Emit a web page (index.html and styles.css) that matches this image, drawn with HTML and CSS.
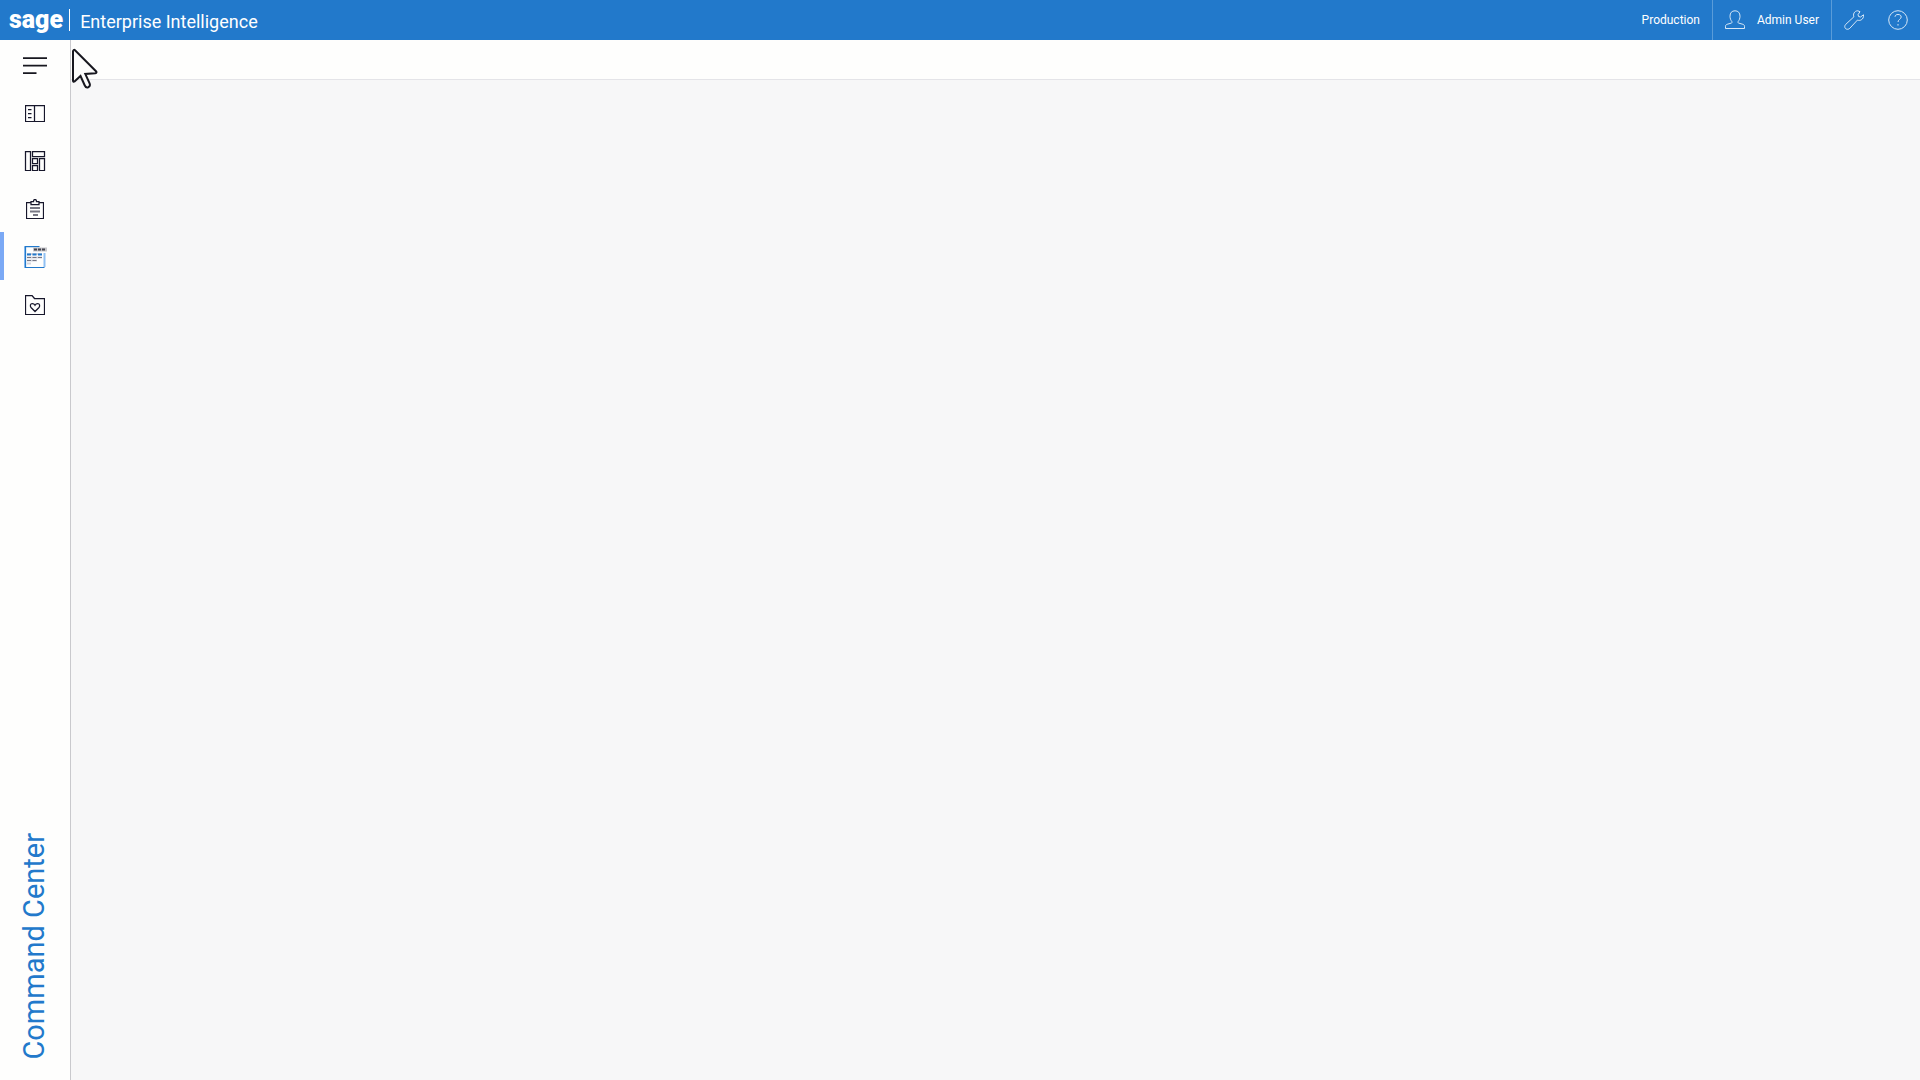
FILE: index.html
```html
<!DOCTYPE html>
<html lang="en">
<head>
    <meta charset="UTF-8">
    <title>Enterprise Intelligence</title>
    <link rel="stylesheet" href="styles.css">
</head>
<body>
<div class="app">
    <header class="header">
        <span class="logo">sage</span>
        <span class="product">Enterprise Intelligence</span>
        <div class="header-right">
            <span class="env">Production</span>
            <button class="user" type="button">
                <svg width="20" height="20" viewBox="0 0 20 20">
                    <path d="M.5 18.500v-2.200c0-1 .6-1.700 1.600-2l4.200-1.200c.8-.3 1-.9.6-1.500C5.800 10.200 5 8.500 5 6.200 5 2.800 6.800.8 10 .8s5 2 5 5.400c0 2.300-.8 4-1.900 5.400-.4.6-.2 1.200.6 1.500l4.200 1.200c1 .3 1.600 1 1.600 2v2.200z"/>
                </svg>
                <span>Admin User</span>
            </button>
            <button class="tool" type="button" aria-label="Settings">
                <svg width="20" height="20" viewBox="0 0 20 20">
                    <path d="M13.800.8 16 1.700l-2 3 .6 1.800 1.900.5 3-2.200c.3 2.300-.6 4.200-2.300 5.100-1.300.7-2.600.6-3.800.2l-7.600 8.200c-1.200 1.200-3 1.300-4.200.3-1.200-1.200-1.100-3 .1-4.200l8.200-7.600c-.5-1.200-.5-2.500.1-3.700.7-1.400 2-2.300 3.800-2.300z"/>
                </svg>
            </button>
            <button class="tool" type="button" aria-label="Help">
                <svg width="20" height="20" viewBox="0 0 20 20">
                    <circle cx="10" cy="10" r="9.300"/>
                    <path d="M7 6.800C7.100 5.200 8.200 4.500 10 4.500c1.900 0 3.200.9 3.200 2.500 0 2.200-3.200 2.500-3.200 5M10 14v1.600"/>
                </svg>
            </button>
        </div>
    </header>

    <div class="body">
        <nav class="sidebar">
            <button class="item" type="button" aria-label="Menu">
                <svg width="24" height="18" viewBox="0 0 24 18">
                    <path class="bars" d="M0 2h24M0 9.500h24M0 17h13.500"/>
                </svg>
            </button>
            <button class="item" type="button" aria-label="Panels">
                <svg width="20" height="18" viewBox="0 0 20 18">
                    <path d="M.5 1.500h19v16H.5zM9.500 1.500v16M3 5.500h3.500M3 9.500h3.500M3 13.500h3.500"/>
                </svg>
            </button>
            <button class="item" type="button" aria-label="Dashboards">
                <svg width="22" height="20" viewBox="0 0 22 20">
                    <path d="M1.500.5h5v19h-5zM8.500.5h12v5h-12zM8.500 7.500h5v5h-5zM8.500 14.500h5v5h-5zM15.500 7.500h5v12h-5z"/>
                </svg>
            </button>
            <button class="item" type="button" aria-label="Worksheets">
                <svg width="18" height="20" viewBox="0 0 18 20">
                    <path d="M4.500 3.500h-4v16h17v-16h-4M5 5.500v-3h2.500C7.500 1 8 .5 9 .5s1.500.5 1.500 2H13v3z"/>
                    <path class="gray" d="M4 9h10M4 12.500h10M7 16h5"/>
                </svg>
            </button>
            <button class="item active" type="button" aria-label="Command Center">
                <svg width="24" height="22" viewBox="0 0 24 22">
                    <path class="edge" d="M2 1v20M21.500 7v14"/>
                    <path class="blue" d="M1.500.5h15M1.500 21.500h20M2.500.5v21"/>
                    <path class="pale" d="M4 8h15M4 11.500h15M4 14.500h10M4 17.500h4"/>
                    <path class="row" d="M4 8.500h4M9.500 8.500h4M15 8.500h4"/>
                    <path class="dark" d="M4 11.500h4M9.500 11.500h4M15 11.500h4M4 14.500h4M9.500 14.500h4"/>
                    <path class="tag" d="M10 3.500h14"/>
                    <path class="mark" d="M11 3.500h12"/>
                </svg>
            </button>
            <button class="item" type="button" aria-label="Favorites">
                <svg width="20" height="20" viewBox="0 0 20 20">
                    <path d="M.5.5H7l2.500 3h10v16H.5z"/>
                    <path d="M10 16.500 6 12.500C4.800 11 5.300 8.700 7.300 8.500c1.300 0 2.200.7 2.700 1.700.5-1 1.400-1.700 2.700-1.700 2 .2 2.500 2.500 1.300 4z"/>
                </svg>
            </button>
            <span class="section">Command Center</span>
        </nav>
        <main class="main">
            <div class="toolbar"></div>
        </main>
    </div>

    <svg class="cursor" width="28" height="42" viewBox="0 0 28 42">
        <path d="M2 3.500v29.300c0 1 .9 1.200 1.500.6l6-5.400 4.300 9.500c.8 1.700 2 2.300 3.500 1.700 1.600-.7 2-2.200 1.300-3.800L14.300 26l10-.8c1.400-.2 1.500-1.200.7-2L4 2.300c-.9-.9-2-.3-2 1.200z"/>
    </svg>
</div>
</body>
</html>
```

FILE: styles.css
```css
* {
    box-sizing: border-box;
}

body {
    margin: 0;
    font-family: Roboto, "Liberation Sans", sans-serif;
    background: #f7f7f8;
}

button {
    padding: 0;
    border: 0;
    background: none;
    color: inherit;
    font: inherit;
    cursor: pointer;
}

svg {
    fill: none;
    stroke: currentColor;
}

.app {
    display: flex;
    flex-direction: column;
    min-height: 100vh;
}

.header {
    display: flex;
    align-items: center;
    height: 40px;
    padding-left: 9px;
    background: #2279cb;
    color: #ffffff;
}

.logo {
    padding-right: 6px;
    border-right: 1px solid #ffffff;
    font-size: 25px;
    font-weight: 900;
    line-height: 22px;
}

.product {
    padding: 3px 0 0 10px;
    font-size: 18px;
}

.header-right {
    display: flex;
    align-items: center;
    height: 100%;
    margin-left: auto;
    font-size: 12px;
}

.header-right svg {
    color: #d8e8f7;
}

.env {
    padding-right: 12px;
}

.user {
    display: flex;
    align-items: center;
    gap: 12px;
    height: 100%;
    padding: 0 12px;
    border-left: 1px solid #5a9cd9;
    border-right: 1px solid #5a9cd9;
}

.tool {
    display: flex;
    align-items: center;
    justify-content: center;
    width: 44px;
    height: 100%;
}

.body {
    display: flex;
    flex: 1;
}

.sidebar {
    display: flex;
    flex-direction: column;
    width: 71px;
    border-right: 1px solid #c9c9cd;
    background: #fefefd;
    color: #17172b;
}

.item {
    display: flex;
    align-items: center;
    justify-content: center;
    height: 48px;
    border-left: 4px solid transparent;
    padding: 2px 4px 0 0;
}

.item svg {
    stroke-width: 1.25;
}

.item.active {
    border-left-color: #7ba9f5;
}

.bars {
    stroke: #17171f;
    stroke-width: 1.75;
}

.gray {
    stroke: #777783;
    stroke-width: 2;
}

.blue {
    stroke: #2279cb;
}

.edge {
    stroke: #8fc0f3;
    stroke-width: 2;
}

.pale {
    stroke: #d3d6df;
    stroke-width: 2;
}

.row {
    stroke: #2279cb;
    stroke-width: 2;
}

.dark {
    stroke: #777783;
    stroke-width: 1;
}

.tag {
    stroke: #c5c5c9;
    stroke-width: 4;
}

.mark {
    stroke: #45454f;
    stroke-width: 2;
    stroke-dasharray: 3 1;
}

.section {
    margin: auto auto 0 14px;
    padding-top: 20px;
    writing-mode: vertical-rl;
    rotate: 180deg;
    color: #2279cb;
    font-size: 29px;
    line-height: 40px;
}

.main {
    flex: 1;
    background: #f7f7f8;
}

.toolbar {
    height: 40px;
    border-bottom: 1px solid #e4e4e8;
    background: #fefefd;
}

.cursor {
    position: absolute;
    top: 48px;
    left: 71px;
    color: #17171f;
    fill: #fcfcfc;
    stroke-width: 2;
}
```
